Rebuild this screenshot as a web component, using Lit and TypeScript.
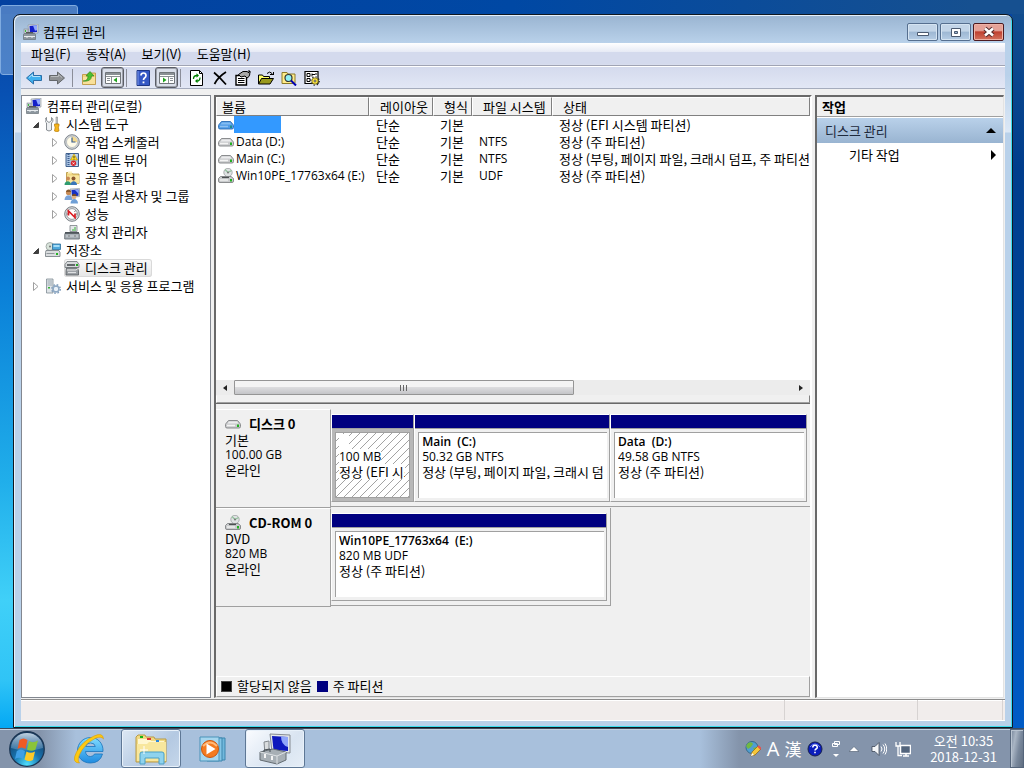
import { LitElement, html, css, svg, nothing } from "lit";
import { customElement } from "lit/decorators.js";
import { classMap } from "lit/directives/class-map.js";

const icon = (body: unknown, size = 16, box = 16) =>
  html`<svg width=${size} height=${size} viewBox="0 0 ${box} ${box}" aria-hidden="true">${body}</svg>`;

const computer = svg`
  <path d="M5 1l10-1v9l-9 1z" fill="#d8dde2" stroke="#8a9299" stroke-width=".6"/>
  <path d="M6.500 2l7.500-.8v6.800l-7 .8z" fill="#1420c8"/><path d="M10 1.600l4-.4v5l-2 .5z" fill="#8fa8ff"/>
  <rect x="1" y="5" width="4" height="5" fill="#c3cad0" stroke="#858d94" stroke-width=".6"/><rect x="2" y="6" width="1" height="2" fill="#3bbf3b"/>
  <path d="M3 9.500h7v-1.500h-7z" fill="#555"/>
  <path d="M.5 10.500l1-1h10l1 1v5h-12z" fill="#8d979f" stroke="#5b646b" stroke-width=".6"/>
  <path d="M1 12.500h11M4 12v2M9 12v2" stroke="#e8ecef"/>`;
const tools = svg`
  <path d="M1.500 1.500v3l2.500 2 2.500-2v-3c2 1 2 4 0 5.500v7q-2.500 2-5 0v-7c-2-1.500-2-4.500 0-5.500z" fill="#eef0f2" stroke="#6d747a" stroke-width=".8"/>
  <path d="M11 1h1.500v7h-1.500z" fill="#c7ccd0" stroke="#777" stroke-width=".5"/>
  <path d="M9.500 8h4.500v2l-.7 1 .7 4q-2.200 1.300-4.500 0l.7-4-.7-1z" fill="#f5b51c" stroke="#b97c08" stroke-width=".7"/>`;
const clock = svg`
  <circle cx="8" cy="8" r="7.300" fill="#d4d7da" stroke="#7e858b" stroke-width="1"/>
  <circle cx="8" cy="8" r="5.500" fill="#fffbe8" stroke="#aab0b5" stroke-width=".7"/>
  <path d="M8 8V2.500A5.500 5.500 0 0 1 13.400 8z" fill="#f4d98e"/>
  <path d="M8 3.500V8h3.500" fill="none" stroke="#3a5f8f" stroke-width="1.200"/>`;
const eventView = svg`
  <path d="M2 1.500h12.500v13H2z" fill="#a9c3e3" stroke="#41608d"/>
  <path d="M4.500 2v12.500" stroke="#3f5f8e" stroke-width="2" stroke-dasharray="1 1"/>
  <path d="M6.500 3h7M6.500 13.500h7" stroke="#dfeaf6"/>
  <path d="M10 2l3.500 6h-7z" fill="#ffdc2a" stroke="#b99000" stroke-width=".6"/><path d="M10 4v2.200M10 6.800v.7" stroke="#222" stroke-width=".9"/>
  <circle cx="9.500" cy="11.300" r="2.700" fill="#d8252b"/><path d="M8.500 10.300l2 2M10.500 10.300l-2 2" stroke="#fff" stroke-width=".8"/>`;
const sharedFolder = svg`
  <path d="M2.500 2.500h5l1 1.500h6.500v9.500h-12.500z" fill="#f0d682" stroke="#b3923a" stroke-width=".8"/>
  <path d="M4 1.500h4v2H4z" fill="#fbf0bf"/><path d="M3 5.500h12v8H3z" fill="#f9e69f"/>
  <circle cx="4" cy="8.500" r="2" fill="#c98a55"/><path d="M.5 15c0-5 6.500-5 6.500 0z" fill="#2f9b6f"/>
  <circle cx="9.500" cy="8.500" r="2" fill="#8a5630"/><path d="M6.500 15c0-5 6.500-5 6.500 0z" fill="#3a76b8"/>`;
const users = svg`
  <path d="M6 1l9.500-.5v8l-9 1z" fill="#d4d9de" stroke="#858e96" stroke-width=".6"/><path d="M7.500 2l7-.4v6.100l-6.500.7z" fill="#1730c4"/><path d="M11 2l3.500-.3v4z" fill="#8ba5ff"/>
  <circle cx="4.500" cy="4.500" r="2.600" fill="#c98d58"/><path d="M2 4c0-3.500 5-3.500 5 0z" fill="#8a5a2c"/><path d="M.5 12c0-6.500 8-6.500 8 0z" fill="#7ba3d8"/>
  <circle cx="10" cy="9" r="2.300" fill="#e0b184"/><path d="M8 8c0-3 4.500-3 4.500 0z" fill="#7a4c22"/><path d="M6.500 15.500c0-6 7.500-6 7.500 0z" fill="#6f9fd6"/>`;
const perf = svg`
  <circle cx="8" cy="8" r="7.300" fill="#e1e3e5" stroke="#777e83"/><circle cx="8" cy="8" r="5.400" fill="#fff" stroke="#8d9296" stroke-width=".9"/>
  <path d="M4 4.500l1.500 1.500M11.500 4.500L10.500 6M3 8h1.500M11.500 8H13" stroke="#555" stroke-width=".8"/>
  <path d="M4.500 9.500V5L11 11.500V7.500" fill="none" stroke="#d91e24" stroke-width="1.700"/>`;
const deviceMgr = svg`
  <path d="M6 1.500h7v6H6z" fill="#e5e8ea" stroke="#7b8287" stroke-width=".8"/><path d="M8 6h4M11 3v2" stroke="#37b337"/>
  <path d="M1.500 8.500h13l.8 2v4.500H.700v-4.500z" fill="#a8b0b6" stroke="#5e666c" stroke-width=".8"/>
  <path d="M1 9h14" stroke="#3d444a" stroke-width="1.400"/><path d="M5 11v2M11 11v2" stroke="#444"/><path d="M2 12h12" stroke="#dfe3e6" stroke-width=".7"/>`;
const storage = svg`
  <circle cx="5" cy="4.500" r="4" fill="#d8e3da" stroke="#8b9490" stroke-width=".7"/><circle cx="5" cy="4.500" r="1" fill="#777"/>
  <path d="M7.500 2h8v5.500h-8z" fill="#4ea9dc" stroke="#2b6d99" stroke-width=".8"/><path d="M8.500 3h6v2h-6z" fill="#a4dcf6"/>
  <path d="M1 8.500h13l1 2v4H.500v-4z" fill="#dadddf" stroke="#71787d" stroke-width=".8"/><path d="M1.500 11.500h8" stroke="#90979b"/><rect x="11" y="11" width="2" height="2" fill="#25b325"/>`;
const diskMgmt = svg`
  <path d="M3 1.500h10l2 3v3H1v-3z" fill="#d6d9db" stroke="#6c7276" stroke-width=".8"/><path d="M3 5h8" stroke="#3c4246" stroke-width="1.500"/><rect x="12" y="4" width="2" height="2" fill="#21a821"/>
  <path d="M2.500 8h11l1 2.500V15H2v-4.500z" fill="#989da1" stroke="#555b5f" stroke-width=".8"/><path d="M3 10h9l2-1.500" stroke="#ececec" fill="none"/><path d="M4 12.500h8" stroke="#dfe1e3" stroke-width="1.200"/>`;
const services = svg`
  <path d="M1.500 1h6.500v14H1.500z" fill="#dfe4e8" stroke="#7f8a93" stroke-width=".8"/><path d="M2.500 3h4.500M2.500 5h4.500M2.500 7h4.500" stroke="#94a0aa" stroke-width=".9"/><rect x="3" y="9" width="2" height="1.500" fill="#35b235"/>
  <circle cx="11" cy="11" r="2.800" fill="none" stroke="#8fa9c4" stroke-width="1.800"/><circle cx="11" cy="11" r="4.300" fill="none" stroke="#7f9cba" stroke-width="1.300" stroke-dasharray="1.700 1.700"/><circle cx="11" cy="11" r="2" fill="#e9f1f8"/>`;
const drive = (blue = false) => svg`
  <path d="M3.500 4.500h9l2.500 3q.5.300.5 1v2q0 1.500-1.500 1.500H2Q.5 12 .5 10.500v-2q0-.7.500-1z" fill="${blue ? "#4f9be6" : "#c9cacc"}" stroke="${blue ? "#2a6cb4" : "#808285"}" stroke-width=".9"/>
  <path d="M4 5.500h8l1.500 2h-11z" fill="${blue ? "#84bcf2" : "#ececed"}"/><path d="M2 9.500h8" stroke="${blue ? "#8dc0f2" : "#f4f4f4"}" stroke-width="1.500"/><rect x="12" y="8.500" width="2" height="2.500" fill="${blue ? "#1f8f8a" : "#21b021"}"/>`;
const cdDrive = svg`
  <circle cx="10" cy="4.500" r="4.200" fill="#dfe2e3" stroke="#9a9ea0" stroke-width=".8"/><path d="M10 4.500L7 1.500M10 4.500l3.500-2" stroke="#8fc19a" stroke-width="1.200"/><circle cx="10" cy="4.500" r="1" fill="#777"/>
  <path d="M2.500 8.500h10.500l2.500 2v2.500q0 1.500-1.500 1.500H2Q.5 14.500.5 13v-2.500z" fill="#c9cbcd" stroke="#808285" stroke-width=".9"/><path d="M4 9.500h7" stroke="#4c4f51" stroke-width="1.200"/><path d="M2 12h8" stroke="#f4f4f4" stroke-width="1.300"/><rect x="12" y="11" width="2" height="2.500" fill="#21b021"/>`;

const tb = {
  back: svg`<path d="M.5 8l7-6v3.500H15.500v5H7.500V14z" fill="#3fb0ee" stroke="#2b6da8"/><path d="M3 7.500l3.500-3V6.500H14" fill="none" stroke="#b5e3fb"/>`,
  fwd: svg`<path d="M15.500 8l-7-6v3.500H.5v5h8V14z" fill="#8e9194" stroke="#63676b"/><path d="M2 6.500h7.500V4.500l3.500 3" fill="none" stroke="#b9bcbf"/>`,
  up: svg`<path d="M1.500 4.500H6L7.500 3H14.500v11.500h-13z" fill="#f1d27c" stroke="#b98f37" stroke-width=".8"/><path d="M2 7h12v7H2z" fill="#f8e09a"/><path d="M2 11q5 0 5-5H5l4-4.500L13 6h-2.500q0 6-8.500 5z" fill="#4bc02f" stroke="#27811a" stroke-width=".6"/>`,
  paneL: svg`<path d="M.5 2.500h15v11H.5z" fill="#fff" stroke="#70757a"/><path d="M1 4h14" stroke="#8a9095" stroke-width="2"/><path d="M1 6.500h14M6.500 7v6" stroke="#8a9095"/><path d="M2 8.500h3M2 10.500h3" stroke="#8a9095"/><path d="M12 7.500v5L8.500 10z" fill="#1fa31f"/>`,
  help: svg`<path d="M2 .5h12.500v15H2z" fill="#3558c5" stroke="#1d3685"/><path d="M3 1v14" stroke="#7b96e8"/><path d="M6 5.500Q6 3 8.500 3T11 5.500Q11 7 9.500 8 8.500 8.700 8.500 10" fill="none" stroke="#fff" stroke-width="1.700"/><path d="M7.600 11.500h1.800v1.800H7.600z" fill="#fff"/>`,
  paneR: svg`<path d="M.5 2.500h15v11H.5z" fill="#fff" stroke="#70757a"/><path d="M1 4h14" stroke="#8a9095" stroke-width="2"/><path d="M1 6.500h14M9.500 7v6" stroke="#8a9095"/><path d="M11 8.500h3M11 10.500h3" stroke="#8a9095"/><path d="M4 7.500v5L7.500 10z" fill="#1fa31f"/>`,
  refresh: svg`<path d="M1.500 .5h9l3 3v12h-12z" fill="#fff" stroke="#000"/><path d="M10.500.500v3h3" fill="none" stroke="#000"/><path d="M4.500 9Q4.500 5.500 8 5.500M11 7.500q0 3.500-3 3.500" fill="none" stroke="#008000" stroke-width="1.300"/><path d="M7.500 3.300L10 5.500 7.500 7.700zM8.500 8.800L6 11l2.500 2.200z" fill="#008000"/>`,
  del: svg`<path d="M2 2.500q6 5 12 12M14 2Q6 7 2.500 14" fill="none" stroke="#000" stroke-width="1.700"/>`,
  props: svg`<path d="M1 5.500h10.500v9.500H1z" fill="#fff" stroke="#000" stroke-width="1.400"/><path d="M3 8.500h6.500M3 10.500h6.500M3 12.500h6.500" stroke="#000"/><path d="M3.500 4.500L8 1.500h4l3 2-1 3-2 1.500-2-2L6 7z" fill="#a8a8a8" stroke="#000"/><path d="M13.500 .5l2 2" stroke="#000" stroke-width="1.400"/>`,
  open: svg`<path d="M.5 14V5h4l1 1.500h6V9" fill="#ffff66" stroke="#000"/><path d="M.5 14l3-5.500h12L12 14z" fill="#9a9a1e" stroke="#000"/><path d="M9 3.500q3-3 5 0v1.500M12 4.500h3.500M15.500 2v3" fill="none" stroke="#000"/>`,
  find: svg`<path d="M1 2.500h5L7 4h7v9.500H1z" fill="#ffec8a" stroke="#8b7a28"/><circle cx="7.500" cy="8" r="3.500" fill="#8ff0f5" stroke="#333" stroke-width="1.200"/><path d="M10 10.500l5 5" stroke="#0000b0" stroke-width="2"/>`,
  settings: svg`<path d="M1 1.500h13v12H1z" fill="#fff" stroke="#000" stroke-width="1.200"/><path d="M3 3.500h3v3H3zM3 8.500h3v3H3z" fill="none" stroke="#000"/><path d="M8 3.500v3M8 4.500h3M12 3v2" stroke="#000"/><circle cx="11" cy="11" r="4.200" fill="none" stroke="#222" stroke-width="1.300" stroke-dasharray="1.300 2"/><circle cx="11" cy="11" r="3.200" fill="#ffe94a" stroke="#5a5000" stroke-width=".7"/><circle cx="11" cy="11" r="1" fill="#fff" stroke="#000" stroke-width=".6"/>`,
};

interface Node { label: string; level: number; glyph: unknown; open?: boolean; leaf?: boolean; selected?: boolean; }
const nodes: Node[] = [
  { label: "컴퓨터 관리(로컬)", level: 0, glyph: computer },
  { label: "시스템 도구", level: 1, glyph: tools, open: true },
  { label: "작업 스케줄러", level: 2, glyph: clock },
  { label: "이벤트 뷰어", level: 2, glyph: eventView },
  { label: "공유 폴더", level: 2, glyph: sharedFolder },
  { label: "로컬 사용자 및 그룹", level: 2, glyph: users },
  { label: "성능", level: 2, glyph: perf },
  { label: "장치 관리자", level: 2, glyph: deviceMgr, leaf: true },
  { label: "저장소", level: 1, glyph: storage, open: true },
  { label: "디스크 관리", level: 2, glyph: diskMgmt, leaf: true, selected: true },
  { label: "서비스 및 응용 프로그램", level: 1, glyph: services },
];

const volumes = [
  { name: "", fs: "", state: "정상 (EFI 시스템 파티션)", glyph: drive(true) },
  { name: "Data (D:)", fs: "NTFS", state: "정상 (주 파티션)", glyph: drive() },
  { name: "Main (C:)", fs: "NTFS", state: "정상 (부팅, 페이지 파일, 크래시 덤프, 주 파티션)", glyph: drive() },
  { name: "Win10PE_17763x64 (E:)", fs: "UDF", state: "정상 (주 파티션)", glyph: cdDrive },
];

const disks = [
  {
    title: "디스크 0", kind: "기본", size: "100.00 GB", glyph: drive(), fill: 100,
    parts: [
      { name: "", size: "100 MB", state: "정상 (EFI 시스템 파티션)", share: 82, selected: true },
      { name: "Main\u00a0 (C:)", size: "50.32 GB NTFS", state: "정상 (부팅, 페이지 파일, 크래시 덤프, 주 파티션)", share: 196 },
      { name: "Data\u00a0 (D:)", size: "49.58 GB NTFS", state: "정상 (주 파티션)", share: 197 },
    ],
  },
  {
    title: "CD-ROM 0", kind: "DVD", size: "820 MB", glyph: cdDrive, fill: 58.5,
    parts: [{ name: "Win10PE_17763x64\u00a0 (E:)", size: "820 MB UDF", state: "정상 (주 파티션)", share: 1 }],
  },
];

const base = css`
  :host { box-sizing: border-box; font: 13px/18px "Noto Sans CJK KR", sans-serif; color: #000; }
  *, *::before, *::after { box-sizing: border-box; }
  button { font: inherit; color: inherit; background: none; border: 0; padding: 0; margin: 0; display: flex; align-items: center; white-space: nowrap; }
  svg { display: block; flex: none; }
  .latin { font-family: "Open Sans", "Noto Sans CJK KR", sans-serif; font-size: 12px; }
`;

@customElement("console-tree")
class ConsoleTree extends LitElement {
  static styles = [base, css`
    :host { display: block; width: 190px; flex: none; background: #fff; border: 1px solid #828790; padding: 1px 0 0 4px; overflow: hidden; }
    ul { list-style: none; margin: 0; padding: 0; }
    li { display: flex; align-items: center; height: 18px; white-space: nowrap; }
    .l1 { padding-left: 5px; }
    .l2 { padding-left: 24px; }
    .arrow { width: 14px; height: 16px; }
    .item { height: 18px; gap: 4px; padding: 0 4px 0 0; border-radius: 3px; }
    .item span { padding-left: 1px; }
    .item.selected { background: linear-gradient(#fafafa, #e6e6e6); box-shadow: inset 0 0 0 1px #d9d9d9; }
  `];
  render() {
    return html`<ul>${nodes.map((n) => html`
      <li class="l${n.level}">
        ${n.level ? html`<svg class="arrow" viewBox="0 0 14 16">${n.leaf ? nothing : n.open
          ? svg`<path d="M7.500 6.500v5h-5z" fill="#404040" stroke="#262626" stroke-width=".8"/>`
          : svg`<path d="M2.500 4.500l4.500 4-4.500 4z" fill="#fff" stroke="#a0a0a0"/>`}</svg>` : nothing}
        <button class=${classMap({ item: true, selected: !!n.selected })}>${icon(n.glyph)}<span>${n.label}</span></button>
      </li>`)}</ul>`;
  }
}

@customElement("volume-list")
class VolumeList extends LitElement {
  static styles = [base, css`
    :host { display: flex; flex-direction: column; flex: none; height: 298px; background: #fff; overflow: hidden; }
    .scroll { flex: 1; overflow: hidden; }
    table { width: 100%; table-layout: fixed; border-collapse: separate; border-spacing: 0; }
    .c0 { width: 153px; } .c1 { width: 64px; } .c2 { width: 39px; } .c3 { width: 80px; }
    th { height: 19px; padding: 1px 0 0 10px; line-height: 16px; font-weight: 400; text-align: left; background: #f0f0f0; border: 1px solid; border-color: #fff #808080 #808080 #fff; white-space: nowrap; overflow: hidden; }
    th:first-child { padding-left: 5px; }
    td { height: 17px; padding: 0 0 0 7px; line-height: 17px; white-space: nowrap; overflow: hidden; }
    td:first-child { padding-left: 2px; }
    .name { display: flex; align-items: center; height: 17px; gap: 2px; }
    .sel { width: 47px; height: 17px; margin-left: -2px; background: #39f; }
    .bar { display: flex; height: 15px; background: #ececec; }
    .bar button { width: 18px; justify-content: center; }
    .track { flex: 1; display: flex; }
    .bar .thumb { flex: 0 0 61%; justify-content: center; border: 1px solid #959595; border-radius: 1px; background: linear-gradient(#f4f4f4 0 45%, #dcdcde 50%, #c4c5c8); }
  `];
  render() {
    return html`
      <div class="scroll"><table>
        <colgroup><col class="c0"><col class="c1"><col class="c2"><col class="c3"><col></colgroup>
        <thead><tr>${["볼륨", "레이아웃", "형식", "파일 시스템", "상태"].map((h) => html`<th scope="col">${h}</th>`)}</tr></thead>
        <tbody>${volumes.map((v) => html`<tr>
          <td><div class="name">${icon(v.glyph)}${v.name ? html`<span class="latin">${v.name}</span>` : html`<span class="sel"></span>`}</div></td>
          <td>단순</td><td>기본</td><td class="latin">${v.fs}</td><td>${v.state}</td></tr>`)}</tbody>
      </table></div>
      <div class="bar">
        <button aria-label="왼쪽으로">${icon(svg`<path d="M6 1v6L2 4z" fill="#222"/>`, 8, 8)}</button>
        <div class="track"><button class="thumb" aria-label="가로 스크롤">${icon(svg`<path d="M.5 1v6M3.500 1v6M6.500 1v6" stroke="#666"/>`, 8, 8)}</button></div>
        <button aria-label="오른쪽으로">${icon(svg`<path d="M2 1v6l4-3z" fill="#222"/>`, 8, 8)}</button>
      </div>`;
  }
}

@customElement("disk-map")
class DiskMap extends LitElement {
  static styles = [base, css`
    :host { display: flex; flex-direction: column; flex: 1; min-height: 0; background: #f0f0f0; border-top: 1px solid #696969; overflow: hidden; }
    .disks { flex: 1; padding-top: 5px; }
    .disk { display: flex; height: 99px; }
    .info { width: 115px; flex: none; padding: 5px 0 0 9px; line-height: 15px; border: solid; border-width: 1px 1px 1px 0; border-color: #fff #a0a0a0 #a0a0a0; }
    .title { display: flex; align-items: center; gap: 8px; height: 17px; font-weight: 700; }
    .lane { flex: 1; min-width: 0; }
    .parts { display: flex; height: 98px; padding: 5px 3px 4px 0; border-bottom: 1px solid #a0a0a0; }
    .short { border-right: 1px solid #a0a0a0; }
    .part { flex-basis: 0; min-width: 0; display: flex; flex-direction: column; border: 1px solid; border-color: #fff #a0a0a0 #a0a0a0 #fff; }
    .stripe { height: 13px; background: #000080; }
    .wrap { flex: 1; min-height: 0; display: flex; border-top: 1px solid #a0a0a0; }
    .body { position: relative; flex: 1; min-width: 0; min-height: 0; margin: 3px 2px 3px 3px; padding: 1px 4px 0 3px; background: #fff; border: solid; border-width: 1px 0 0 1px; border-color: #a0a0a0; line-height: 15px; white-space: nowrap; overflow: hidden; }
    .text { position: relative; height: 15px; overflow: hidden; }
    .name { font-weight: 600; }
    .picked .text span { display: inline-block; background: #fff; min-width: 10px; height: 15px; }
    .picked .wrap { background: #b8b8b8; }
    .picked .body { border-width: 1px; margin-right: 3px; }
    .hatch { position: absolute; inset: 0; width: 100%; height: 100%; }
    .legend { display: flex; align-items: center; gap: 5px; height: 21px; padding: 0 0 1px 4px; border: 1px solid; border-color: #fff #a0a0a0 #a0a0a0 #fff; }
    .swatch { width: 11px; height: 11px; border: 1px solid #444; background: #000; }
    .primary { background: #000080; border-color: #000080; }
  `];
  render() {
    return html`
      <div class="disks">${disks.map((d) => html`<section class="disk">
        <div class="info"><div class="title">${icon(d.glyph)}<span>${d.title}</span></div><div>${d.kind}</div><div class="latin">${d.size}</div><div>온라인</div></div>
        <div class="lane"><div class=${classMap({ parts: true, short: d.fill < 100 })} style="width:${d.fill}%">
          ${d.parts.map((p: any) => html`<div class=${classMap({ part: true, picked: !!p.selected })} style="flex-grow:${p.share}">
            <div class="stripe"></div>
            <div class="wrap"><div class="body">
              ${p.selected ? html`<svg class="hatch"><defs><pattern id="h" width="8" height="8" patternUnits="userSpaceOnUse"><path d="M-1 9L9-1M-1 1L1-1M7 9l2-2" stroke="#8c8c8c" stroke-width=".8"/></pattern></defs><rect width="100%" height="100%" fill="url(#h)"/></svg>` : nothing}
              <div class="text latin name"><span>${p.name}</span></div><div class="text latin"><span>${p.size}</span></div><div class="text"><span>${p.state}</span></div>
            </div></div>
          </div>`)}
        </div></div>
      </section>`)}</div>
      <div class="legend"><span class="swatch"></span><span>할당되지 않음</span><span class="swatch primary"></span><span>주 파티션</span></div>`;
  }
}

@customElement("task-bar")
class TaskBar extends LitElement {
  static styles = [base, css`
    :host { display: flex; height: 40px; color: #fff; background: linear-gradient(90deg, #8494ab 0 40px, #a8c0dc 76px, #a8c0dc calc(100% - 324px), #8494ab calc(100% - 285px)); border-top: 1px solid #3c4a5c; box-shadow: inset 0 1px #c4d2e2; }
    .apps { display: flex; flex: 1; align-items: center; }
    .start { width: 54px; height: 39px; justify-content: center; }
    .app { width: 60px; height: 39px; margin-right: 2px; justify-content: center; }
    .first { margin-left: 5px; }
    .running { border: 1px solid #5e7795; border-radius: 3px; background: linear-gradient(135deg, #dce7f3, #b4c9e2 60%, #c6d7ea); box-shadow: inset 0 0 0 1px #e8f1fa; }
    .active { background: linear-gradient(135deg, #fafcff, #d9e4f1 60%, #e6eef7); }
    .tray { display: flex; align-items: center; }
    .tray button { height: 39px; justify-content: center; }
    .tray .lang { width: 20px; font-size: 17px; line-height: 20px; }
    .tray .alpha { font-family: "Open Sans", sans-serif; font-size: 20px; }
    .ico { width: 24px; }
    .thin { width: 18px; }
    .vol { margin-left: 4px; }
    .clock { width: 93px; margin-left: 2px; text-align: center; line-height: 16px; flex-direction: column; }
    .tray .show { width: 14px; border: 1px solid #55657b; background: linear-gradient(100deg, #76869b, #a9b5c4 30%, #7a899d 60%, #5f6d80); box-shadow: inset 1px 1px #b8c3d0; }
  `];
  render() {
    return html`
      <div class="apps">
        <button class="start" aria-label="시작">${icon(svg`
          <defs><radialGradient id="o" cx=".5" cy=".95" r=".9"><stop offset="0" stop-color="#4fe0ff"/><stop offset=".45" stop-color="#1772ad"/><stop offset="1" stop-color="#15375e"/></radialGradient>
          <linearGradient id="g" x2="0" y2="1"><stop offset="0" stop-color="#dfeefa" stop-opacity=".85"/><stop offset="1" stop-color="#9cc4e4" stop-opacity=".25"/></linearGradient></defs>
          <circle cx="18" cy="18" r="17.300" fill="url(#o)" stroke="#1b3552" stroke-width="1.200"/><path d="M2 17a16 15 0 0 1 32 0q-16 5-32 0z" fill="url(#g)"/>
          <path d="M10.500 9q4-3 8 0l-2 9q-4-3-8 0z" fill="#ee5a24"/><path d="M20 10q4 2.500 9-.5l-2.500 9q-4 2.500-8.500 0z" fill="#8ac43a"/>
          <path d="M7.800 20q4-3 8.200 0l-2 8q-4-2.500-8 0z" fill="#3f9fe6"/><path d="M17.500 20.500q4 2.500 8.500 0l-2 8.500q-4 2.500-8.500-.5z" fill="#fcc928"/>`, 36, 36)}</button>
        <button class="app first" aria-label="Internet Explorer">${icon(svg`
          <defs><linearGradient id="e" x2="0" y2="1"><stop offset="0" stop-color="#7fdcff"/><stop offset="1" stop-color="#1f8be0"/></linearGradient></defs>
          <path d="M30 18.500H12.500q.5 5 5 5 3 0 4-2.500H29.500q-2.500 9-12 9C9.500 30 4.500 24.500 4.500 17.500S10 4.500 17.500 4.500 30.500 10.500 30 18.500zM12.700 13.500h9.600q-.5-3.500-4.800-3.500t-4.800 3.500z" fill="url(#e)" stroke="#1a73bb" stroke-width=".8"/>
          <path d="M6.500 30Q-2 30 3.500 19 9.500 8 21 3q9-4 9.500 3-2-3-7.500-1-8 3-14 12Q3 27 6.500 30z" fill="#fdc910" stroke="#d89b08" stroke-width=".6"/>`, 32, 32)}</button>
        <button class="app running" aria-label="Windows 탐색기">${icon(svg`
          <path d="M1 4l2-2h7l1 2h8l1 2h11v23H1z" fill="#f1da84" stroke="#b99a45"/><path d="M3 6h12l1 2h13v3H3z" fill="#fff7d0"/><path d="M5 3h3v2H5z" fill="#14b514"/><path d="M12 5h4v2h-4z" fill="#d33"/><path d="M21 7h3v2h-3z" fill="#2b87dd"/>
          <path d="M2 11h10l2-2h17v19H2z" fill="#f8e79d"/><path d="M5 31V21q0-2 2-2h20q2 0 2 2v10h-5v-6H10v6z" fill="#8fd3ee" stroke="#4a9fc6"/><path d="M9 13v8M5 17h8" stroke="#fff"/>`, 32, 32)}</button>
        <button class="app" aria-label="Windows Media Player">${icon(svg`
          <path d="M14 5h14v22H14z" fill="#71b8dc" stroke="#3c86ae"/><path d="M10 5h15v23H10z" fill="#85c6e6" stroke="#3c86ae"/><path d="M3 4h19v24H3z" fill="#a6d6ee" stroke="#4a93b9"/>
          <circle cx="13" cy="16" r="8.500" fill="#f47b20" stroke="#ce560c"/><path d="M6 13q7-7 14 0" stroke="#ffb978" stroke-width="2" fill="none"/><path d="M9.500 10.500v11l9-5.500z" fill="#fff"/>`, 32, 32)}</button>
        <button class="app running active" aria-label="컴퓨터 관리">${icon(svg`
          <path d="M11 1l20 1v18l-18-1z" fill="#e3e6e9" stroke="#858b91"/><path d="M13 3l16 1v14l-14.500-1z" fill="#0d18bd"/><path d="M22 3.500l7 .5v10q-7-2-7-10.500z" fill="#8fa5fa"/><path d="M5 9l5-1v12l-4 1z" fill="#dadddf" stroke="#82888d"/><path d="M13 19l13 1-2 4H12z" fill="#9fa5aa"/>
          <path d="M1 19l13-3 13 3v8l-9 4L1 27z" fill="#a7afb5" stroke="#646c72"/><path d="M1 19l17 4v8M18 23l9-4" fill="none" stroke="#dde1e4"/><path d="M5 19v-2l6-1v3" fill="none" stroke="#454c52"/><path d="M6 21v4M13 23v4" stroke="#f4f4f4" stroke-width="2"/>`, 32, 32)}</button>
      </div>
      <div class="tray">
        <button class="lang" aria-label="입력기">${icon(svg`<circle cx="7" cy="6.500" r="6" fill="#4f9ed2" stroke="#396b88"/><path d="M3 2q4-2 5 1L6 6 3 8 1 5zM8 7l4-1-2 5z" fill="#72b843"/><path d="M6 15l1-4L13 5l3 3-6 6z" fill="#f5c63a" stroke="#84621b" stroke-width=".7"/><path d="M6 15l1-3 2 2z" fill="#fff"/><path d="M13 5l3 3" stroke="#e65050" stroke-width="2"/>`)}</button>
        <button class="lang alpha">A</button><button class="lang">漢</button>
        <button class="ico" aria-label="도움말">${icon(svg`<circle cx="8" cy="8" r="7" fill="#0a1dbb" stroke="#16204c"/><path d="M3 6q5-6 10 0" fill="none" stroke="#7888ef"/><path d="M5.800 6.500Q5.800 4.300 8 4.300T10.300 6.200Q10.300 7.300 9 8 8 8.600 8 9.500" fill="none" stroke="#fff" stroke-width="1.500"/><path d="M7.200 10.700h1.600v1.600H7.200z" fill="#fff"/>`)}</button>
        <button class="thin" aria-label="옵션">${icon(svg`<path d="M7.500 1.500h5v3h-5zM5.500 3.500h5v3h-5z" fill="#8494ab" stroke="#fff"/><path d="M6 14h6l-3 3z" fill="#fff"/>`, 18, 18)}</button>
        <button class="thin" aria-label="숨겨진 아이콘 표시">${icon(svg`<path d="M0 6l4-4 4 4z" fill="#fff" stroke="#4c5a6e" stroke-width=".5"/>`, 10, 8)}</button>
        <button class="ico vol" aria-label="볼륨">${icon(svg`<path d="M1 5.500h3L8 1.500v13l-4-4H1z" fill="#f5f7f9" stroke="#3c4858" stroke-width=".8"/><path d="M10 5.500q2 2.500 0 5M12 3.500q3.500 4.500 0 9M14 2.500q3.500 5.500 0 11" fill="none" stroke="#fff"/>`)}</button>
        <button class="ico" aria-label="네트워크">${icon(svg`<path d="M5.500 4.500h10v8h-10z" fill="#53657d" stroke="#fff" stroke-width="1.500"/><path d="M8 15h6M11 13v2" stroke="#fff" stroke-width="1.500"/><path d="M1 1v4h4V1M3 5v9.500h4" fill="none" stroke="#fff" stroke-width="1.300"/>`)}</button>
        <button class="clock"><span>오전 10:35</span><span>2018-12-31</span></button>
        <button class="show" aria-label="바탕 화면 보기"></button>
      </div>`;
  }
}

@customElement("app-root")
class AppRoot extends LitElement {
  static styles = [base, css`
    :host { display: flex; flex-direction: column; height: 100vh; overflow: hidden;
      background: linear-gradient(#06439f 0, #0850b2 90px, #0a80d8 290px, #20aeea 480px, #40d0f8 600px, #30c4f6 680px, #04a8f4 728px); }
    .desktop { flex: 1; min-height: 0; display: flex; padding: 14px 11px 0 13px; background: linear-gradient(90deg, #0341a0 0, #0048a4 50%, #165090 95%) top / 100% 14px no-repeat, linear-gradient(#134e8e 0, #003d8c 170px, #00489e 400px, #005bc6 100%) right / 12px 100% no-repeat; position: relative; }
    .shortcut { position: absolute; left: 0; top: 5px; width: 78px; height: 70px; border: 1px solid #7fabe0; border-radius: 3px; background: rgb(160 195 235 / 45%); }
    .window { position: relative; flex: 1; min-width: 0; display: flex; flex-direction: column; padding: 0 7px 6px; border: 1px solid #101820; border-radius: 7px 7px 0 0; box-shadow: inset 1px 1px #e6f1fb, inset -1px -1px #3adcee;
      background: linear-gradient(#99b4d1 0, #b9d1ea 28px, #b9d1ea 60px, #dce8f6 117px, #b9d1ea 118px); }
    .title { display: flex; align-items: flex-start; height: 28px; padding-left: 2px; }
    .title > svg { margin-top: 9px; }
    h1 { flex: 1; font: inherit; margin: 8px 0 0 4px; }
    .caps { display: flex; gap: 2px; padding: 8px 1px 0 0; }
    .caps button { width: 31px; height: 18px; justify-content: center; border: 1px solid #566f8f; border-radius: 2px; background: linear-gradient(#c3d5e8 0 45%, #9db7d3 50%, #b6cde5); box-shadow: inset 0 0 0 1px #d5e4f2; }
    .caps .close { border-color: #4c1a20; background: linear-gradient(#e5a298 0 40%, #bf4030 50%, #d3735f); box-shadow: inset 0 0 0 1px #eeb2a6; }
    .client { flex: 1; min-height: 0; display: flex; flex-direction: column; background: #f0f0f0; }
    .menu { display: flex; height: 23px; padding-left: 10px; gap: 15px; background: linear-gradient(#fff, #e6eaf5 9px, #d4daed 9px 21px, #dce0ee); border-bottom: 1px solid #a0a4b4; }
    .tools { display: flex; align-items: center; height: 23px; padding-left: 5px; border-top: 1px solid #fff; border-bottom: 1px solid #a5acbd; background: linear-gradient(#d4daed, #e2e7f5); }
    .tools button { width: 16px; height: 16px; margin-right: 7px; }
    .tools button.toggled { width: 23px; height: 21px; margin: 0 2px 0 -3px; justify-content: center; border: 1px solid #5a5d66; border-radius: 3px; background: #dadfea; box-shadow: inset 0 0 0 1px #9da1ab; }
    .sep { width: 1px; height: 18px; background: #8b8e99; margin-right: 8px; }
    .panes { flex: 1; min-height: 0; display: flex; gap: 3px; padding: 6px 1px 1px 0; }
    .center, .actions { display: flex; flex-direction: column; border: solid; border-width: 2px 1px 1px 2px; border-color: #696969 #e3e3e3 #e3e3e3 #696969; min-width: 0; }
    .center { flex: 1; border-right: 2px solid #fff; }
    .split { flex: none; height: 8px; border: solid; border-width: 1px; border-color: #f0f0f0 #808080 #a0a0a0 #fff; background: #f0f0f0; }
    .actions { width: 189px; flex: none; background: #fff; }
    h2 { margin: 0; height: 20px; padding-left: 5px; font: 700 13px/20px "Noto Sans CJK KR", sans-serif; background: #f0f0f0; border-bottom: 1px solid #a0a0a0; }
    .group { height: 25px; margin-top: 1px; padding: 0 6px 0 8px; justify-content: space-between; background: linear-gradient(#b9d1ea, #99b4d1); color: #1e2a3c; }
    .more { height: 24px; padding: 0 4px 0 32px; justify-content: space-between; }
    .status { display: flex; height: 22px; border-top: 1px solid #8c8c8c; border-bottom: 1px solid #fff; background: #f1edec; box-shadow: inset 0 1px #fff; padding-right: 2px; }
    .status span { border-right: 1px solid #d7d3d2; }
    .s0 { flex: 1; } .s1 { width: 133px; } .s2 { width: 85px; }
  `];
  render() {
    const b = (g: unknown, label: string, on = false) => html`<button class=${classMap({ toggled: on })} aria-label=${label}>${icon(g)}</button>`;
    return html`
      <div class="desktop">
        <div class="shortcut"></div>
        <main class="window">
          <header class="title">${icon(computer)}<h1>컴퓨터 관리</h1>
            <div class="caps">
              <button aria-label="최소화">${icon(svg`<path d="M2.500 8.500h11v3h-11z" fill="#fff" stroke="#4b5a70"/>`)}</button>
              <button aria-label="최대화">${icon(svg`<path d="M3.500 4.500h9v8h-9z" fill="#fff" stroke="#4b5a70"/><path d="M6.500 7.500h3v2h-3z" fill="#9db7d3" stroke="#4b5a70"/>`)}</button>
              <button class="close" aria-label="닫기">${icon(svg`<path d="M4 4.500l8 7M12 4.500l-8 7" stroke="#51292b" stroke-width="4.500"/><path d="M4 4.500l8 7M12 4.500l-8 7" stroke="#fff" stroke-width="2.600"/>`)}</button>
            </div>
          </header>
          <div class="client">
            <nav class="menu">${["파일(F)", "동작(A)", "보기(V)", "도움말(H)"].map((m) => html`<button>${m}</button>`)}</nav>
            <div class="tools">
              ${b(tb.back, "뒤로")}${b(tb.fwd, "앞으로")}<span class="sep"></span>
              ${b(tb.up, "위로")}${b(tb.paneL, "콘솔 트리", true)}<span class="sep"></span>
              ${b(tb.help, "도움말")}${b(tb.paneR, "작업 창", true)}<span class="sep"></span>
              ${b(tb.refresh, "새로 고침")}${b(tb.del, "삭제")}${b(tb.props, "속성")}${b(tb.open, "열기")}${b(tb.find, "찾기")}${b(tb.settings, "설정")}
            </div>
            <div class="panes">
              <console-tree></console-tree>
              <section class="center"><volume-list></volume-list><div class="split"></div><disk-map></disk-map></section>
              <aside class="actions">
                <h2>작업</h2>
                <button class="group"><span>디스크 관리</span>${icon(svg`<path d="M1 8l5-5 5 5z" fill="#000"/>`, 12, 12)}</button>
                <button class="more"><span>기타 작업</span>${icon(svg`<path d="M4 1v10l5-5z" fill="#000"/>`, 12, 12)}</button>
              </aside>
            </div>
            <footer class="status"><span class="s0"></span><span class="s1"></span><span class="s2"></span></footer>
          </div>
        </main>
      </div>
      <task-bar></task-bar>`;
  }
}
